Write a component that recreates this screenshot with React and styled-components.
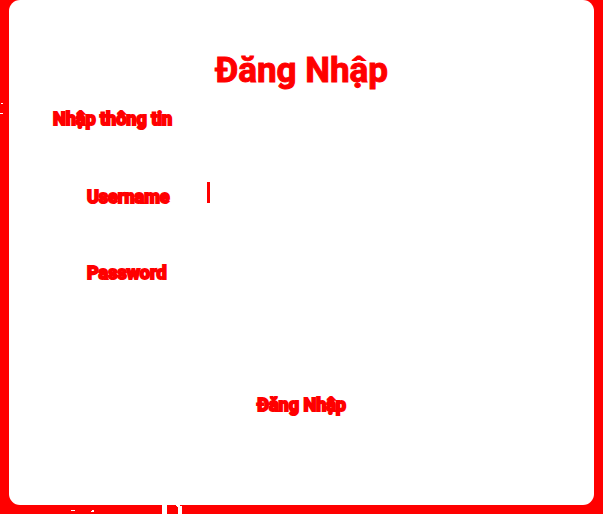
import React from "react";
import styled, { createGlobalStyle } from "styled-components";

const GlobalStyle = createGlobalStyle`
  * { box-sizing: border-box; }
  html { background: #ff0000; }
  body {
    margin: 0;
    color: #ff0000;
    font-family: Roboto, "Noto Sans", sans-serif;
    font-weight: 700;
  }
`;

const Page = styled.main`
  position: relative;
  min-height: 100vh;
  display: flex;
  flex-direction: column;
  padding: 0 9px;
  overflow: hidden;
`;

const Card = styled.form`
  flex: 1;
  display: flex;
  flex-direction: column;
  padding: 46px 44px 80px;
  background: #ffffff;
  border-radius: 11px;
`;

const Title = styled.h1`
  margin: 0 0 10px;
  font-size: 35px;
  line-height: 50px;
  text-align: center;
  -webkit-text-stroke: 1px #ff0000;
`;

const Hint = styled.p`
  margin: 0 0 50px;
  font-size: 18px;
  line-height: 26px;
  -webkit-text-stroke: 2px #ff0000;
`;

const Field = styled.div`
  display: grid;
  grid-template-columns: 120px 1fr;
  align-items: start;
  height: 30px;
  margin: 0 0 46px 34px;
`;

const Label = styled.label`
  font-size: 18px;
  line-height: 30px;
  -webkit-text-stroke: 2px #ff0000;
`;

const InputShell = styled.div`
  display: flex;
  align-items: center;
  height: 21px;
  border-left: 3px solid ${({ $active }) => ($active ? "#ff0000" : "transparent")};
`;

const Input = styled.input`
  width: 100%;
  border: 0;
  padding: 0;
  outline: 0;
  background: transparent;
  color: #ff0000;
  font: inherit;
  font-size: 18px;
`;

const Submit = styled.button`
  align-self: center;
  margin-top: 58px;
  padding: 0;
  border: 0;
  background: transparent;
  color: #ff0000;
  font: inherit;
  font-size: 18px;
  line-height: 26px;
  -webkit-text-stroke: 2px #ff0000;
`;

const BottomEdge = styled.svg`
  display: block;
  width: 174px;
  height: 9px;
  flex: none;
`;

const SideMarks = styled.svg`
  position: absolute;
  left: 0;
  top: 103px;
  width: 4px;
  height: 11px;
`;

export default function App() {
  return (
    <>
      <GlobalStyle />
      <Page>
        <Card onSubmit={(event) => event.preventDefault()}>
          <Title>Đăng Nhập</Title>
          <Hint>Nhập thông tin</Hint>
          <Field>
            <Label htmlFor="username">Username</Label>
            <InputShell $active>
              <Input id="username" type="text" />
            </InputShell>
          </Field>
          <Field>
            <Label htmlFor="password">Password</Label>
            <InputShell>
              <Input id="password" type="password" />
            </InputShell>
          </Field>
          <Submit type="submit">Đăng Nhập</Submit>
        </Card>
        <BottomEdge viewBox="0 0 174 9" fill="#ffffff" shapeRendering="crispEdges" aria-hidden="true">
          <path d="M62 5h4v1h-4z M83 5h2v2h-3v-1h1z M153 0h5v9h-5z M167 0h4v1h2v8h-4V2h-1V1h-1z" />
        </BottomEdge>
        <SideMarks viewBox="0 0 4 11" fill="#ffffff" shapeRendering="crispEdges" aria-hidden="true">
          <path d="M1 0h2v1H1z M0 10h3v1H0z" />
        </SideMarks>
      </Page>
    </>
  );
}
